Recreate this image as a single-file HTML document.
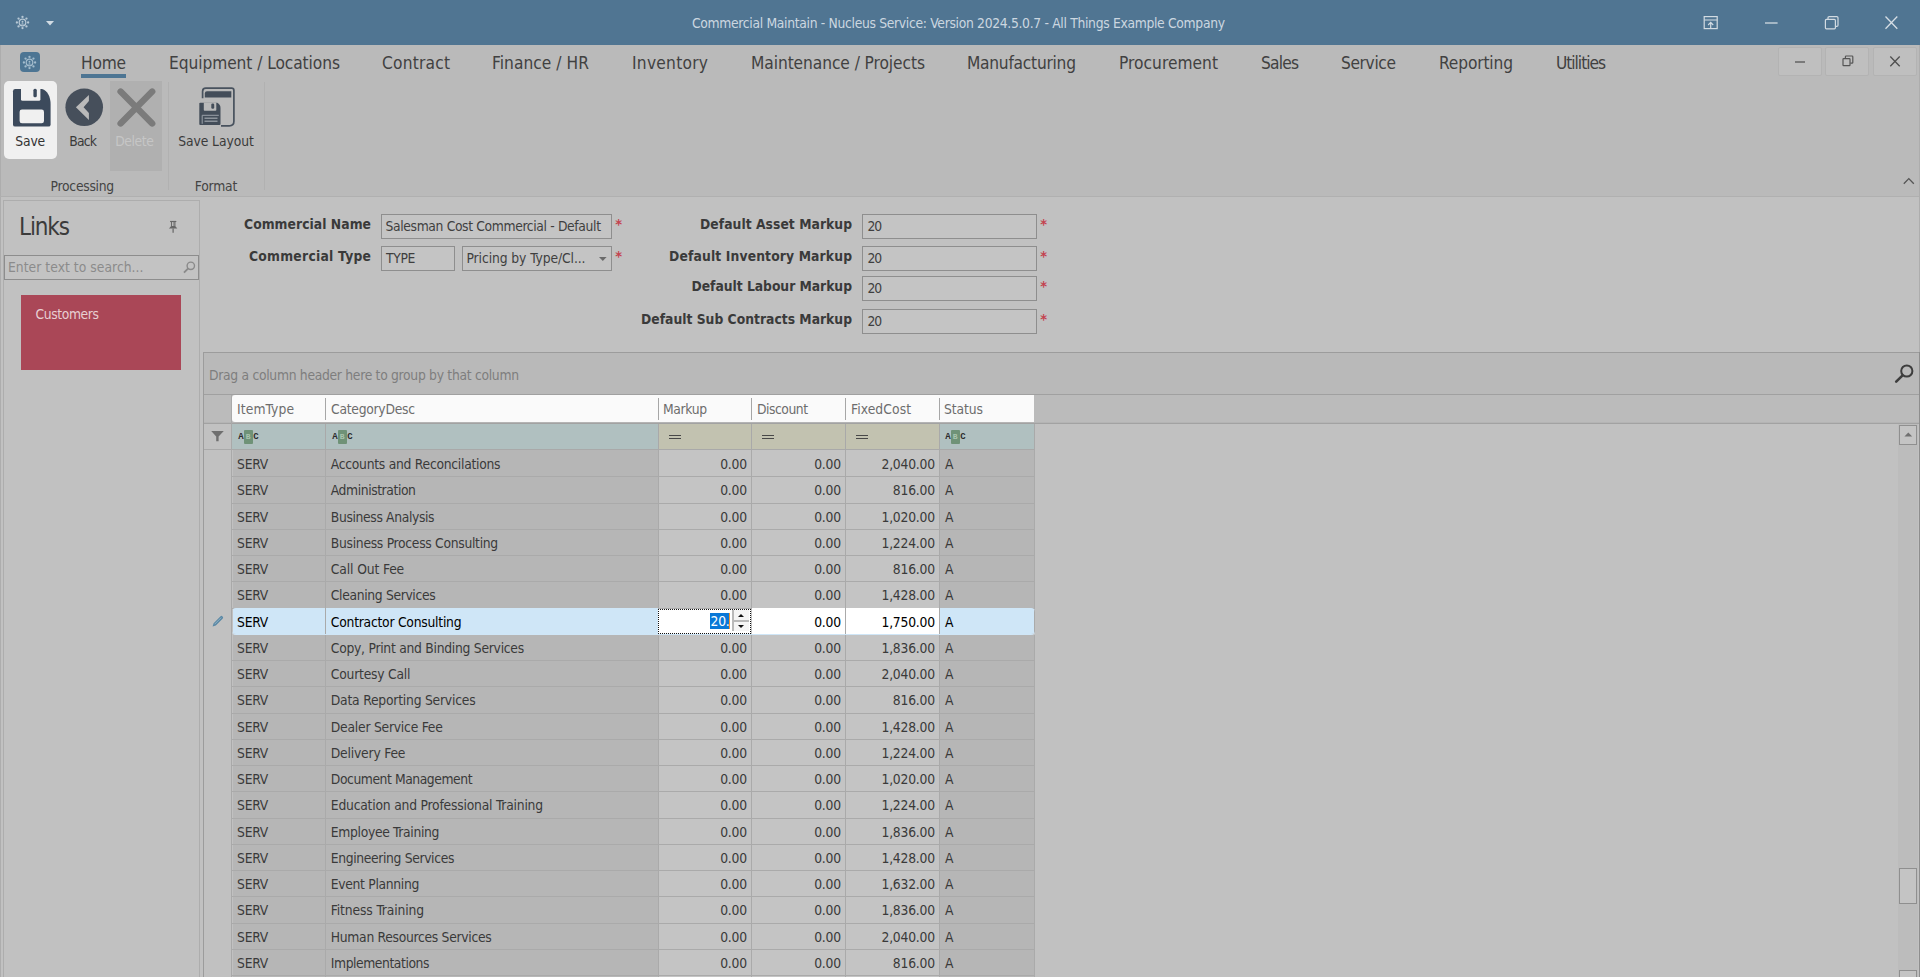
<!DOCTYPE html>
<html lang="en">
<head>
<meta charset="utf-8">
<title>Commercial Maintain - Nucleus Service</title>
<style>
*{box-sizing:border-box;margin:0;padding:0}
html,body{width:1920px;height:977px;overflow:hidden;background:#c1c1c1}
body{position:relative;font-family:"DejaVu Sans Condensed","Liberation Sans",sans-serif;font-size:13.75px;color:#3a3a3a}
.abs,.t,#titlebar,#tabrow,#ribbon,#content,#links,#grid{position:absolute}
.t{white-space:nowrap;line-height:normal}
svg{position:absolute;overflow:visible}
#titlebar{left:0;top:0;width:1920px;height:45px;background:#507592}
#ribbon{left:0;top:45px;width:1920px;height:152px;background:#bababa;border-bottom:1px solid #b0b0b0;border-left:1px solid #adadad}
#homeline{left:81px;top:74px;width:45px;height:3.5px;background:#4d7593}
#appicon{position:absolute;left:20px;top:52px;width:20px;height:20px;border-radius:4px;background:#4d7593}
.rbtn{position:absolute;border-radius:5px}
#bsave{left:4px;top:81px;width:53px;height:78px;background:#f0f0f0}
#bdel{left:110px;top:81px;width:52px;height:90px;background:#b0b0b0;border-radius:0}
.gsep{position:absolute;top:82px;width:1px;height:108px;background:#b1b1b1}
.mdi{position:absolute;top:47px;width:44px;height:29px;border:1px solid #b3b3b3;background:#bfbfbf;border-radius:2px}
#content{left:0;top:197px;width:1920px;height:780px;background:#c1c1c1;border-left:1px solid #adadad}
#links{left:3px;top:200px;width:197px;height:790px;border:1px solid #adadad;background:#c1c1c1}
#search{left:4px;top:255px;width:195px;height:25px;border:1px solid #8d8d8d;background:#c3c3c3}
#tile{left:21px;top:295px;width:160px;height:75px;background:#aa4757}
.inp{position:absolute;height:25px;border:1px solid #8e8e8e;background:#c4c4c4}
.ast{position:absolute;color:#c4424e;font-size:14.5px;font-weight:700;line-height:1;margin-top:-.8px;margin-left:.3px}
#grid{left:203px;top:352px;width:1717px;height:640px;border:1px solid #9c9c9c;background:#c1c1c1}
#gpanel{left:204px;top:353px;width:1715px;height:42px;background:#b9b9b9;border-bottom:1px solid #a0a0a0}
#hdrline{left:204px;top:422px;width:1715px;height:2px;background:#a2a2a2;border-top:1px solid #b4b4b4}
#hdrband{left:204px;top:395px;width:1715px;height:27px;background:#bbb}
#hdr{left:232px;top:395px;width:802px;height:27px;background:#fafafa;border-radius:3px 0 0 3px}
.hsep{position:absolute;top:398px;width:1px;height:22px;background:#a6a6a6}
#filter{left:204px;top:424px;width:830px;height:26px}
.fc{position:absolute;top:0;height:26px;border-bottom:1px solid #a9a9a9;border-right:1px solid #a9a9a9}
.fs{background:#b0c0c0}.fn{background:#c2c2b0}
#indcol{left:204px;top:395px;width:28px;height:590px;border-right:1px solid #a9a9a9}
#indf{left:204px;top:424px;width:27px;height:26px;border-bottom:1px solid #a9a9a9}
.row{position:absolute;left:232px;width:803px;border-bottom:1px solid #aaa}
.cell{position:absolute;top:0;border-right:1px solid #aaa;overflow:hidden;letter-spacing:-0.22px;white-space:nowrap;box-sizing:content-box}
.cell span{position:absolute;left:4px;line-height:normal}
.cell.n span{left:auto;right:4.2px}
.cell.c5 span{left:5px}
.c0,.c1,.c5{background:#b6b6b6}
.c2,.c3,.c4{background:#c4c4c4}
.row.sel .cell{background:#cfe6f7;color:#000}
.row.sel .c2,.row.sel .c3,.row.sel .c4{background:#fff}
.row.sel{border-bottom-color:#cfe6f7;border-radius:4px;overflow:hidden}
#sbtrack{left:1898px;top:424px;width:20px;height:560px;background:#bcbcbc}
.sbb{position:absolute;left:1899px;width:18px;border:1px solid #8f8f8f;background:#c4c4c4}
#rborder{left:1919px;top:45px;width:1px;height:307px;background:#adadad}#rborder2{left:1919px;top:352px;width:1px;height:625px;background:#8e8e8e}
.cell.edit{border:0;background:#fff !important;z-index:3;letter-spacing:0}
.cell.edit:before{content:"";position:absolute;left:0;top:0;right:0;bottom:0;border:1px dotted #111}
.cell.edit .selnum{position:absolute;right:auto;left:52px;top:3.5px;width:19.5px;height:16.4px;background:#0a78d7;color:#fff;line-height:normal;padding-left:.6px;letter-spacing:-.3px}
.caret{position:absolute;left:71px;top:3.5px;width:1px;height:16.4px;background:#f39432}
.cell.edit .spin{position:absolute;left:74.2px;right:auto;top:1px;width:17.2px;height:21.3px;background:#b9b9b9}
.spin i{position:absolute;left:1.6px;width:15.6px;background:#f5f5f5}
.spin i.up{top:.4px;height:9.8px}.spin i.dn{top:12px;height:9.4px}
.spin i:after{content:"";position:absolute;left:4.2px;border:3.5px solid transparent}
.spin i.up:after{top:3.4px;border-bottom:3.4px solid #111;border-top:0}
.spin i.dn:after{top:3px;border-top:3.6px solid #111;border-bottom:0}
.abc{position:absolute;top:430px;height:14px;width:21px;font-family:"Liberation Mono","DejaVu Sans Mono",monospace;font-size:9px;font-weight:700;line-height:14px;color:#2d2d2d;white-space:nowrap}
.abc b{position:absolute;left:0;top:0;width:6px;text-align:center}
.abc b:last-child{left:15px}
.abc i{position:absolute;left:6px;top:0;width:8.5px;height:14px;background:#6f9277;color:#a9c4ae;font-style:normal;text-align:center;border-radius:1px;font-size:8px}
.eq{position:absolute;top:434.8px;width:11.5px;height:4.4px;border-top:1.7px solid #484848;border-bottom:1.7px solid #484848}
</style>
</head>
<body>
<div id="titlebar"></div>
<div id="ribbon"></div>
<div id="appicon"></div>
<div id="homeline" class="abs"></div>
<div id="bsave" class="rbtn"></div>
<div id="bdel" class="rbtn"></div>
<div class="gsep" style="left:168px"></div>
<div class="gsep" style="left:264px"></div>
<div class="mdi" style="left:1778px"></div>
<div class="mdi" style="left:1825px"></div>
<div class="mdi" style="left:1873px"></div>
<div id="content"></div>
<div id="links"></div>
<div id="search" class="abs"></div>
<div id="tile" class="abs"></div>

<div class="inp" style="left:381px;top:214px;width:231px"></div>
<div class="inp" style="left:381px;top:246px;width:74px"></div>
<div class="inp" style="left:462px;top:246px;width:150px"></div>
<div class="inp" style="left:862px;top:214px;width:175px"></div>
<div class="inp" style="left:862px;top:246px;width:175px"></div>
<div class="inp" style="left:862px;top:276px;width:175px"></div>
<div class="inp" style="left:862px;top:309px;width:175px"></div>

<div id="grid"></div>
<div id="gpanel" class="abs"></div>
<div id="hdrband" class="abs"></div>
<div id="hdr" class="abs"></div>
<div id="hdrline" class="abs"></div>
<div class="hsep" style="left:325px"></div>
<div class="hsep" style="left:658px"></div>
<div class="hsep" style="left:751px"></div>
<div class="hsep" style="left:845px"></div>
<div class="hsep" style="left:939px"></div>
<div id="indcol" class="abs"></div><div id="indf" class="abs"></div>
<div id="filter" class="abs">
 <div class="fc fs" style="left:28px;width:94px"></div>
 <div class="fc fs" style="left:122px;width:333px"></div>
 <div class="fc fn" style="left:455px;width:93px"></div>
 <div class="fc fn" style="left:548px;width:94px"></div>
 <div class="fc fn" style="left:642px;width:94px"></div>
 <div class="fc fs" style="left:736px;width:95px"></div>
</div>
<div id="rows">
<div class="row" style="top:450px;height:27px"><div class="cell c0" style="left:1px;width:92px;height:26px"><span style="top:6.00px">SERV</span></div><div class="cell c1" style="left:94px;width:332px;height:26px"><span style="top:6.00px;left:4.8px;letter-spacing:-0.267px">Accounts and Reconcilations</span></div><div class="cell c2 n" style="left:427px;width:92px;height:26px"><span style="top:6.00px">0.00</span></div><div class="cell c3 n" style="left:520px;width:93px;height:26px"><span style="top:6.00px">0.00</span></div><div class="cell c4 n" style="left:614px;width:93px;height:26px"><span style="top:6.00px">2,040.00</span></div><div class="cell c5" style="left:708px;width:94px;height:26px"><span style="top:6.00px">A</span></div></div>
<div class="row" style="top:477px;height:27px"><div class="cell c0" style="left:1px;width:92px;height:26px"><span style="top:5.25px">SERV</span></div><div class="cell c1" style="left:94px;width:332px;height:26px"><span style="top:5.25px;left:4.8px;letter-spacing:-0.414px">Administration</span></div><div class="cell c2 n" style="left:427px;width:92px;height:26px"><span style="top:5.25px">0.00</span></div><div class="cell c3 n" style="left:520px;width:93px;height:26px"><span style="top:5.25px">0.00</span></div><div class="cell c4 n" style="left:614px;width:93px;height:26px"><span style="top:5.25px">816.00</span></div><div class="cell c5" style="left:708px;width:94px;height:26px"><span style="top:5.25px">A</span></div></div>
<div class="row" style="top:504px;height:26px"><div class="cell c0" style="left:1px;width:92px;height:25px"><span style="top:4.50px">SERV</span></div><div class="cell c1" style="left:94px;width:332px;height:25px"><span style="top:4.50px;left:4.8px;letter-spacing:-0.356px">Business Analysis</span></div><div class="cell c2 n" style="left:427px;width:92px;height:25px"><span style="top:4.50px">0.00</span></div><div class="cell c3 n" style="left:520px;width:93px;height:25px"><span style="top:4.50px">0.00</span></div><div class="cell c4 n" style="left:614px;width:93px;height:25px"><span style="top:4.50px">1,020.00</span></div><div class="cell c5" style="left:708px;width:94px;height:25px"><span style="top:4.50px">A</span></div></div>
<div class="row" style="top:530px;height:26px"><div class="cell c0" style="left:1px;width:92px;height:25px"><span style="top:4.75px">SERV</span></div><div class="cell c1" style="left:94px;width:332px;height:25px"><span style="top:4.75px;left:4.8px;letter-spacing:-0.294px">Business Process Consulting</span></div><div class="cell c2 n" style="left:427px;width:92px;height:25px"><span style="top:4.75px">0.00</span></div><div class="cell c3 n" style="left:520px;width:93px;height:25px"><span style="top:4.75px">0.00</span></div><div class="cell c4 n" style="left:614px;width:93px;height:25px"><span style="top:4.75px">1,224.00</span></div><div class="cell c5" style="left:708px;width:94px;height:25px"><span style="top:4.75px">A</span></div></div>
<div class="row" style="top:556px;height:26px"><div class="cell c0" style="left:1px;width:92px;height:25px"><span style="top:5.00px">SERV</span></div><div class="cell c1" style="left:94px;width:332px;height:25px"><span style="top:5.00px;left:4.8px;letter-spacing:-0.139px">Call Out Fee</span></div><div class="cell c2 n" style="left:427px;width:92px;height:25px"><span style="top:5.00px">0.00</span></div><div class="cell c3 n" style="left:520px;width:93px;height:25px"><span style="top:5.00px">0.00</span></div><div class="cell c4 n" style="left:614px;width:93px;height:25px"><span style="top:5.00px">816.00</span></div><div class="cell c5" style="left:708px;width:94px;height:25px"><span style="top:5.00px">A</span></div></div>
<div class="row" style="top:582px;height:27px"><div class="cell c0" style="left:1px;width:92px;height:26px"><span style="top:5.25px">SERV</span></div><div class="cell c1" style="left:94px;width:332px;height:26px"><span style="top:5.25px;left:4.8px;letter-spacing:-0.344px">Cleaning Services</span></div><div class="cell c2 n" style="left:427px;width:92px;height:26px"><span style="top:5.25px">0.00</span></div><div class="cell c3 n" style="left:520px;width:93px;height:26px"><span style="top:5.25px">0.00</span></div><div class="cell c4 n" style="left:614px;width:93px;height:26px"><span style="top:5.25px">1,428.00</span></div><div class="cell c5" style="left:708px;width:94px;height:26px"><span style="top:5.25px">A</span></div></div>
<div class="row sel" style="top:608px;height:27px"><div class="cell c0" style="left:1px;width:92px;height:26px"><span style="top:5.50px">SERV</span></div><div class="cell c1" style="left:94px;width:332px;height:26px"><span style="top:5.50px;left:4.8px;letter-spacing:-0.240px">Contractor Consulting</span></div><div class="cell c2 n edit" style="left:426px;top:1px;width:93px;height:25px"><span class="selnum">20.</span><b class="caret"></b><span class="spin"><i class="up"></i><i class="dn"></i></span></div><div class="cell c3 n" style="left:520px;width:93px;height:26px"><span style="top:5.50px">0.00</span></div><div class="cell c4 n" style="left:614px;width:93px;height:26px"><span style="top:5.50px">1,750.00</span></div><div class="cell c5" style="left:708px;width:94px;height:26px"><span style="top:5.50px">A</span></div></div>
<div class="row" style="top:635px;height:26px"><div class="cell c0" style="left:1px;width:92px;height:25px"><span style="top:4.75px">SERV</span></div><div class="cell c1" style="left:94px;width:332px;height:25px"><span style="top:4.75px;left:4.8px;letter-spacing:-0.267px">Copy, Print and Binding Services</span></div><div class="cell c2 n" style="left:427px;width:92px;height:25px"><span style="top:4.75px">0.00</span></div><div class="cell c3 n" style="left:520px;width:93px;height:25px"><span style="top:4.75px">0.00</span></div><div class="cell c4 n" style="left:614px;width:93px;height:25px"><span style="top:4.75px">1,836.00</span></div><div class="cell c5" style="left:708px;width:94px;height:25px"><span style="top:4.75px">A</span></div></div>
<div class="row" style="top:661px;height:26px"><div class="cell c0" style="left:1px;width:92px;height:25px"><span style="top:5.00px">SERV</span></div><div class="cell c1" style="left:94px;width:332px;height:25px"><span style="top:5.00px;left:4.8px;letter-spacing:-0.222px">Courtesy Call</span></div><div class="cell c2 n" style="left:427px;width:92px;height:25px"><span style="top:5.00px">0.00</span></div><div class="cell c3 n" style="left:520px;width:93px;height:25px"><span style="top:5.00px">0.00</span></div><div class="cell c4 n" style="left:614px;width:93px;height:25px"><span style="top:5.00px">2,040.00</span></div><div class="cell c5" style="left:708px;width:94px;height:25px"><span style="top:5.00px">A</span></div></div>
<div class="row" style="top:687px;height:27px"><div class="cell c0" style="left:1px;width:92px;height:26px"><span style="top:5.25px">SERV</span></div><div class="cell c1" style="left:94px;width:332px;height:26px"><span style="top:5.25px;left:4.8px;letter-spacing:-0.219px">Data Reporting Services</span></div><div class="cell c2 n" style="left:427px;width:92px;height:26px"><span style="top:5.25px">0.00</span></div><div class="cell c3 n" style="left:520px;width:93px;height:26px"><span style="top:5.25px">0.00</span></div><div class="cell c4 n" style="left:614px;width:93px;height:26px"><span style="top:5.25px">816.00</span></div><div class="cell c5" style="left:708px;width:94px;height:26px"><span style="top:5.25px">A</span></div></div>
<div class="row" style="top:714px;height:26px"><div class="cell c0" style="left:1px;width:92px;height:25px"><span style="top:4.50px">SERV</span></div><div class="cell c1" style="left:94px;width:332px;height:25px"><span style="top:4.50px;left:4.8px;letter-spacing:-0.235px">Dealer Service Fee</span></div><div class="cell c2 n" style="left:427px;width:92px;height:25px"><span style="top:4.50px">0.00</span></div><div class="cell c3 n" style="left:520px;width:93px;height:25px"><span style="top:4.50px">0.00</span></div><div class="cell c4 n" style="left:614px;width:93px;height:25px"><span style="top:4.50px">1,428.00</span></div><div class="cell c5" style="left:708px;width:94px;height:25px"><span style="top:4.50px">A</span></div></div>
<div class="row" style="top:740px;height:26px"><div class="cell c0" style="left:1px;width:92px;height:25px"><span style="top:4.75px">SERV</span></div><div class="cell c1" style="left:94px;width:332px;height:25px"><span style="top:4.75px;left:4.8px;letter-spacing:-0.206px">Delivery Fee</span></div><div class="cell c2 n" style="left:427px;width:92px;height:25px"><span style="top:4.75px">0.00</span></div><div class="cell c3 n" style="left:520px;width:93px;height:25px"><span style="top:4.75px">0.00</span></div><div class="cell c4 n" style="left:614px;width:93px;height:25px"><span style="top:4.75px">1,224.00</span></div><div class="cell c5" style="left:708px;width:94px;height:25px"><span style="top:4.75px">A</span></div></div>
<div class="row" style="top:766px;height:26px"><div class="cell c0" style="left:1px;width:92px;height:25px"><span style="top:5.00px">SERV</span></div><div class="cell c1" style="left:94px;width:332px;height:25px"><span style="top:5.00px;left:4.8px;letter-spacing:-0.433px">Document Management</span></div><div class="cell c2 n" style="left:427px;width:92px;height:25px"><span style="top:5.00px">0.00</span></div><div class="cell c3 n" style="left:520px;width:93px;height:25px"><span style="top:5.00px">0.00</span></div><div class="cell c4 n" style="left:614px;width:93px;height:25px"><span style="top:5.00px">1,020.00</span></div><div class="cell c5" style="left:708px;width:94px;height:25px"><span style="top:5.00px">A</span></div></div>
<div class="row" style="top:792px;height:27px"><div class="cell c0" style="left:1px;width:92px;height:26px"><span style="top:5.25px">SERV</span></div><div class="cell c1" style="left:94px;width:332px;height:26px"><span style="top:5.25px;left:4.8px;letter-spacing:-0.213px">Education and Professional Training</span></div><div class="cell c2 n" style="left:427px;width:92px;height:26px"><span style="top:5.25px">0.00</span></div><div class="cell c3 n" style="left:520px;width:93px;height:26px"><span style="top:5.25px">0.00</span></div><div class="cell c4 n" style="left:614px;width:93px;height:26px"><span style="top:5.25px">1,224.00</span></div><div class="cell c5" style="left:708px;width:94px;height:26px"><span style="top:5.25px">A</span></div></div>
<div class="row" style="top:819px;height:26px"><div class="cell c0" style="left:1px;width:92px;height:25px"><span style="top:4.50px">SERV</span></div><div class="cell c1" style="left:94px;width:332px;height:25px"><span style="top:4.50px;left:4.8px;letter-spacing:-0.324px">Employee Training</span></div><div class="cell c2 n" style="left:427px;width:92px;height:25px"><span style="top:4.50px">0.00</span></div><div class="cell c3 n" style="left:520px;width:93px;height:25px"><span style="top:4.50px">0.00</span></div><div class="cell c4 n" style="left:614px;width:93px;height:25px"><span style="top:4.50px">1,836.00</span></div><div class="cell c5" style="left:708px;width:94px;height:25px"><span style="top:4.50px">A</span></div></div>
<div class="row" style="top:845px;height:26px"><div class="cell c0" style="left:1px;width:92px;height:25px"><span style="top:4.75px">SERV</span></div><div class="cell c1" style="left:94px;width:332px;height:25px"><span style="top:4.75px;left:4.8px;letter-spacing:-0.357px">Engineering Services</span></div><div class="cell c2 n" style="left:427px;width:92px;height:25px"><span style="top:4.75px">0.00</span></div><div class="cell c3 n" style="left:520px;width:93px;height:25px"><span style="top:4.75px">0.00</span></div><div class="cell c4 n" style="left:614px;width:93px;height:25px"><span style="top:4.75px">1,428.00</span></div><div class="cell c5" style="left:708px;width:94px;height:25px"><span style="top:4.75px">A</span></div></div>
<div class="row" style="top:871px;height:26px"><div class="cell c0" style="left:1px;width:92px;height:25px"><span style="top:5.00px">SERV</span></div><div class="cell c1" style="left:94px;width:332px;height:25px"><span style="top:5.00px;left:4.8px;letter-spacing:-0.319px">Event Planning</span></div><div class="cell c2 n" style="left:427px;width:92px;height:25px"><span style="top:5.00px">0.00</span></div><div class="cell c3 n" style="left:520px;width:93px;height:25px"><span style="top:5.00px">0.00</span></div><div class="cell c4 n" style="left:614px;width:93px;height:25px"><span style="top:5.00px">1,632.00</span></div><div class="cell c5" style="left:708px;width:94px;height:25px"><span style="top:5.00px">A</span></div></div>
<div class="row" style="top:897px;height:27px"><div class="cell c0" style="left:1px;width:92px;height:26px"><span style="top:5.25px">SERV</span></div><div class="cell c1" style="left:94px;width:332px;height:26px"><span style="top:5.25px;left:4.8px;letter-spacing:-0.137px">Fitness Training</span></div><div class="cell c2 n" style="left:427px;width:92px;height:26px"><span style="top:5.25px">0.00</span></div><div class="cell c3 n" style="left:520px;width:93px;height:26px"><span style="top:5.25px">0.00</span></div><div class="cell c4 n" style="left:614px;width:93px;height:26px"><span style="top:5.25px">1,836.00</span></div><div class="cell c5" style="left:708px;width:94px;height:26px"><span style="top:5.25px">A</span></div></div>
<div class="row" style="top:924px;height:26px"><div class="cell c0" style="left:1px;width:92px;height:25px"><span style="top:4.50px">SERV</span></div><div class="cell c1" style="left:94px;width:332px;height:25px"><span style="top:4.50px;left:4.8px;letter-spacing:-0.297px">Human Resources Services</span></div><div class="cell c2 n" style="left:427px;width:92px;height:25px"><span style="top:4.50px">0.00</span></div><div class="cell c3 n" style="left:520px;width:93px;height:25px"><span style="top:4.50px">0.00</span></div><div class="cell c4 n" style="left:614px;width:93px;height:25px"><span style="top:4.50px">2,040.00</span></div><div class="cell c5" style="left:708px;width:94px;height:25px"><span style="top:4.50px">A</span></div></div>
<div class="row" style="top:950px;height:26px"><div class="cell c0" style="left:1px;width:92px;height:25px"><span style="top:4.75px">SERV</span></div><div class="cell c1" style="left:94px;width:332px;height:25px"><span style="top:4.75px;left:4.8px;letter-spacing:-0.433px">Implementations</span></div><div class="cell c2 n" style="left:427px;width:92px;height:25px"><span style="top:4.75px">0.00</span></div><div class="cell c3 n" style="left:520px;width:93px;height:25px"><span style="top:4.75px">0.00</span></div><div class="cell c4 n" style="left:614px;width:93px;height:25px"><span style="top:4.75px">816.00</span></div><div class="cell c5" style="left:708px;width:94px;height:25px"><span style="top:4.75px">A</span></div></div>
<div class="row" style="top:976px;height:2px;border:0"><div class="cell c0" style="left:1px;width:92px;height:2px"></div><div class="cell c1" style="left:94px;width:332px;height:2px"></div><div class="cell c2 n" style="left:427px;width:92px;height:2px"></div><div class="cell c3 n" style="left:520px;width:93px;height:2px"></div><div class="cell c4 n" style="left:614px;width:93px;height:2px"></div><div class="cell c5" style="left:708px;width:94px;height:2px"></div></div>
</div>
<div id="sbtrack" class="abs"></div>
<div class="sbb" style="top:425px;height:20px"></div>
<div class="sbb" style="top:868px;height:36px"></div>
<div class="sbb" style="top:970px;height:20px"></div>
<div id="rborder" class="abs"></div><div id="rborder2" class="abs"></div>

<!-- title bar quick access gear + dropdown -->
<svg style="left:14.9px;top:15.0px" width="15" height="15" viewBox="-7.5 -7.5 15 15">
 <circle r="3.3" fill="none" stroke="#b7c8d5" stroke-width="1.2"/>
 <g fill="#b7c8d5"><circle cx="5.60" cy="0.00" r="1.15"/><circle cx="3.96" cy="3.96" r="1.15"/><circle cx="0.00" cy="5.60" r="1.15"/><circle cx="-3.96" cy="3.96" r="1.15"/><circle cx="-5.60" cy="0.00" r="1.15"/><circle cx="-3.96" cy="-3.96" r="1.15"/><circle cx="-0.00" cy="-5.60" r="1.15"/><circle cx="3.96" cy="-3.96" r="1.15"/><circle cx="0" cy="-0.7" r="0.95"/><path d="M-1.5,2Q0,-0.4 1.5,2Z"/></g>
</svg>
<svg style="left:46px;top:21px" width="8" height="5" viewBox="0 0 8 5"><path d="M0,0H8L4,4.5Z" fill="#d2dce4"/></svg>
<!-- app icon gear -->
<svg style="left:22.4px;top:55.0px" width="15" height="15" viewBox="-7.5 -7.5 15 15">
 <circle r="3.3" fill="none" stroke="#a3bccd" stroke-width="1.2"/>
 <g fill="#a3bccd"><circle cx="5.60" cy="0.00" r="1.15"/><circle cx="3.96" cy="3.96" r="1.15"/><circle cx="0.00" cy="5.60" r="1.15"/><circle cx="-3.96" cy="3.96" r="1.15"/><circle cx="-5.60" cy="0.00" r="1.15"/><circle cx="-3.96" cy="-3.96" r="1.15"/><circle cx="-0.00" cy="-5.60" r="1.15"/><circle cx="3.96" cy="-3.96" r="1.15"/><circle cx="0" cy="-0.7" r="0.95"/><path d="M-1.5,2Q0,-0.4 1.5,2Z"/></g>
</svg>
<!-- window buttons -->
<svg style="left:1703px;top:15px" width="16" height="15" viewBox="0 0 16 15" fill="none" stroke="#d2dbe2" stroke-width="1.2">
 <rect x="1.2" y="1.6" width="13" height="12"/><path d="M1.2,5H14.2M7.7,13.6V7.6M5.2,10L7.7,7.4L10.2,10"/>
</svg>
<svg style="left:1765px;top:22px" width="13" height="2" viewBox="0 0 13 2"><path d="M0,1H12.6" stroke="#d2dbe2" stroke-width="1.3"/></svg>
<svg style="left:1824px;top:15px" width="15" height="15" viewBox="0 0 15 15" fill="none" stroke="#d2dbe2" stroke-width="1.2">
 <rect x="1.4" y="4.4" width="10" height="9.4" rx="1"/><path d="M4,4.2V2.8Q4,1.6 5.2,1.6H12.8Q14,1.6 14,2.8V10.2Q14,11.4 12.8,11.4H11.6"/>
</svg>
<svg style="left:1885px;top:16px" width="13" height="13" viewBox="0 0 13 13"><path d="M0.5,0.5L12.3,12.7M12.3,0.5L0.5,12.7" stroke="#d6dee5" stroke-width="1.3"/></svg>
<!-- MDI buttons -->
<svg style="left:1795px;top:61px" width="11" height="2" viewBox="0 0 11 2"><path d="M0,1H10" stroke="#555" stroke-width="1.3"/></svg>
<svg style="left:1842px;top:55px" width="12" height="12" viewBox="0 0 12 12" fill="none" stroke="#555" stroke-width="1.2">
 <rect x="1" y="3.6" width="7" height="7" rx=".6"/><path d="M3.4,3.4V1.8Q3.4,1 4.2,1H10Q10.8,1 10.8,1.8V7.4Q10.8,8.2 10,8.2H8.4"/>
</svg>
<svg style="left:1890px;top:56px" width="10" height="11" viewBox="0 0 10 11"><path d="M0.3,0.5L9.7,10.3M9.7,0.5L0.3,10.3" stroke="#4f4f4f" stroke-width="1.3"/></svg>
<!-- collapse chevron -->
<svg style="left:1903px;top:177px" width="12" height="8" viewBox="0 0 12 8"><path d="M0.8,6.8L5.8,1.6L10.8,6.8" fill="none" stroke="#555" stroke-width="1.3"/></svg>

<!-- Save icon -->
<svg style="left:12.8px;top:88.6px" width="37.6" height="37.6" viewBox="0 0 37.6 37.6">
 <path d="M2.2,0H29C34.5,1.5 37.6,8 37.6,15V35.4Q37.6,37.6 35.4,37.6H2.2Q0,37.6 0,35.4V2.2Q0,0 2.2,0Z" fill="#3c4a5c"/>
 <path d="M8,-0.3H27.4V10.2Q27.4,11.7 25.9,11.7H9.5Q8,11.7 8,10.2Z" fill="#f0f0f0"/>
 <rect x="20.4" y="-0.3" width="3.4" height="8.6" rx="1.5" fill="#3c4a5c"/>
 <rect x="6.6" y="20.5" width="24.4" height="13.8" rx="2.4" fill="#f0f0f0"/>
</svg>
<!-- Back icon -->
<svg style="left:65px;top:88px" width="39" height="39" viewBox="-19.2 -19.3 39 39">
 <circle r="18.8" fill="#464f5b"/>
 <path d="M-8.3,0L4.7,-12.2V-6.2L-0.6,0L4.7,5.8V12.6Z" fill="#bababa"/>
</svg>
<!-- Delete icon -->
<svg style="left:116px;top:87px" width="41" height="41" viewBox="116 87 41 41">
 <path d="M120.6,91.6L152.2,123.4M152.2,91.6L120.6,123.4" stroke="#7b7b7b" stroke-width="6.4" stroke-linecap="round" fill="none"/>
</svg>
<!-- Save layout icon -->
<svg style="left:198px;top:86px" width="38" height="42" viewBox="198 86 38 42">
 <path d="M202.6,98.2V91.4Q202.6,88.2 205.8,88.2H231.6Q233.9,88.2 233.9,90.4V121.2Q233.9,125.8 229.3,125.8H221" fill="none" stroke="#48525e" stroke-width="1.7"/>
 <path d="M204.8,97.4V93.4Q204.8,91.2 207,91.2H231.3V97.4Z" fill="#434d59"/>
 <path d="M200.2,102.8H217.2Q220.5,104.6 220.5,108V124Q220.5,124.9 219.6,124.9H200.2Q199.3,124.9 199.3,124V103.7Q199.3,102.8 200.2,102.8Z" fill="#434d59"/>
 <path d="M203.8,102.6H216.3V110Q216.3,110.8 215.5,110.8H204.6Q203.8,110.8 203.8,110Z" fill="#bababa"/>
 <rect x="211.3" y="103.6" width="2.9" height="5.2" rx="1.2" fill="#434d59"/>
 <path d="M202.2,123.8V115.3H218.8" fill="none" stroke="#9aa0a8" stroke-width="1"/>
 <path d="M204.5,118.2H217.5M204.5,121.2H217.5" stroke="#8c939b" stroke-width="1.6"/>
</svg>

<!-- Links pin -->
<svg style="left:168px;top:220px" width="11" height="14" viewBox="0 0 11 14">
 <path d="M2.1,1.5H8.3" stroke="#666" stroke-width="1.2" fill="none"/>
 <path d="M3.5,1.6V6.2M6.9,1.6V6.2" stroke="#6a6a6a" stroke-width="1.1" fill="none"/>
 <path d="M5.9,1.8V6.2" stroke="#777" stroke-width="1" fill="none"/>
 <path d="M3.2,6L0.9,8.4H9.3L7.2,6Z" fill="#666"/>
 <path d="M5.1,8.4V12.8" stroke="#666" stroke-width="1.2" fill="none"/>
</svg>
<!-- Links search magnifier -->
<svg style="left:183px;top:261px" width="13" height="13" viewBox="0 0 13 13" fill="none" stroke="#8a8a8a" stroke-width="1.3">
 <circle cx="7.8" cy="4.8" r="3.7" stroke-width="1.4"/><path d="M5.2,7.4L1,11.6" stroke-width="1.9"/>
</svg>
<!-- combo arrow -->
<svg style="left:599px;top:257px" width="8" height="5" viewBox="0 0 8 5"><path d="M0,0H7.6L3.8,4Z" fill="#6a6a6a"/></svg>
<!-- Grid search magnifier -->
<svg style="left:1894px;top:363px" width="21" height="21" viewBox="0 0 21 21" fill="none" stroke="#3d3d3d">
 <circle cx="12.8" cy="8" r="5.6" stroke-width="2"/><path d="M8.6,12.4L2.2,18.6" stroke-width="2.6" stroke-linecap="round"/>
</svg>
<!-- filter funnel -->
<svg style="left:211px;top:431px" width="13" height="11" viewBox="0 0 13 11"><path d="M0.2,0H12.8L7.6,5.4V10.2H5.2V5.4Z" fill="#6f6f6f"/></svg>
<!-- pencil (editing row) -->
<svg style="left:212px;top:615px" width="12" height="12" viewBox="0 0 12 12"><path d="M0.6,11.4L1.6,8.2L8.6,1.2Q9.4,0.4 10.2,1.2L10.8,1.8Q11.6,2.6 10.8,3.4L3.8,10.4Z" fill="#5a88a5"/><path d="M2.6,9.2L9.2,2.6" stroke="#8fb0c4" stroke-width="1" fill="none"/></svg>
<!-- scrollbar arrows -->
<svg style="left:1904px;top:432px" width="9" height="5" viewBox="0 0 9 5"><path d="M0.4,4.6H8.2L4.3,0.4Z" fill="#707070"/></svg>

<span class="ast" style="left:615px;top:218px">*</span>
<span class="ast" style="left:615px;top:250px">*</span>
<span class="ast" style="left:1040px;top:218px">*</span>
<span class="ast" style="left:1040px;top:250px">*</span>
<span class="ast" style="left:1040px;top:280px">*</span>
<span class="ast" style="left:1040px;top:313px">*</span>
<div class="abc" style="left:238px"><b>A</b><i>B</i><b>C</b></div>
<div class="abc" style="left:332px"><b>A</b><i>B</i><b>C</b></div>
<div class="abc" style="left:945px"><b>A</b><i>B</i><b>C</b></div>
<div class="eq" style="left:669px"></div>
<div class="eq" style="left:762.4px"></div>
<div class="eq" style="left:856px"></div>


<div id="texts">
<span class="t" style="left:692.0px;top:14.50px;font-size:13.75px;color:#ccd7e0;letter-spacing:-0.312px;">Commercial Maintain - Nucleus Service: Version 2024.5.0.7 - All Things Example Company</span>
<span class="t" style="left:81.0px;top:52.50px;font-size:17.2px;color:#414141;letter-spacing:-0.224px;">Home</span>
<span class="t" style="left:169.0px;top:52.50px;font-size:17.2px;color:#414141;letter-spacing:-0.070px;">Equipment / Locations</span>
<span class="t" style="left:382.0px;top:52.50px;font-size:17.2px;color:#414141;letter-spacing:0.212px;">Contract</span>
<span class="t" style="left:492.0px;top:52.50px;font-size:17.2px;color:#414141;letter-spacing:0.050px;">Finance / HR</span>
<span class="t" style="left:632.0px;top:52.50px;font-size:17.2px;color:#414141;letter-spacing:0.268px;">Inventory</span>
<span class="t" style="left:751.0px;top:52.50px;font-size:17.2px;color:#414141;letter-spacing:-0.072px;">Maintenance / Projects</span>
<span class="t" style="left:967.0px;top:52.50px;font-size:17.2px;color:#414141;letter-spacing:-0.249px;">Manufacturing</span>
<span class="t" style="left:1119.0px;top:52.50px;font-size:17.2px;color:#414141;letter-spacing:0.030px;">Procurement</span>
<span class="t" style="left:1261.0px;top:52.50px;font-size:17.2px;color:#414141;letter-spacing:-0.793px;">Sales</span>
<span class="t" style="left:1341.0px;top:52.50px;font-size:17.2px;color:#414141;letter-spacing:-0.359px;">Service</span>
<span class="t" style="left:1439.0px;top:52.50px;font-size:17.2px;color:#414141;letter-spacing:-0.139px;">Reporting</span>
<span class="t" style="left:1556.0px;top:52.50px;font-size:17.2px;color:#414141;letter-spacing:-1.025px;">Utilities</span>
<span class="t" style="left:15.3px;top:133.00px;font-size:13.75px;color:#333;letter-spacing:-0.158px;">Save</span>
<span class="t" style="left:69.3px;top:133.00px;font-size:13.75px;color:#3a3a3a;letter-spacing:-0.777px;">Back</span>
<span class="t" style="left:115.2px;top:133.00px;font-size:13.75px;color:#c6c6c6;letter-spacing:-0.391px;">Delete</span>
<span class="t" style="left:178.2px;top:133.00px;font-size:13.75px;color:#3a3a3a;letter-spacing:-0.074px;">Save Layout</span>
<span class="t" style="left:50.6px;top:178.00px;font-size:13.75px;color:#444;letter-spacing:-0.268px;">Processing</span>
<span class="t" style="left:194.7px;top:178.00px;font-size:13.75px;color:#444;letter-spacing:-0.163px;">Format</span>
<span class="t" style="left:19.0px;top:212.50px;font-size:24px;color:#3b3b3b;letter-spacing:-1.117px;">Links</span>
<span class="t" style="left:8.0px;top:259.00px;font-size:13.75px;color:#8b8b8b;letter-spacing:0.039px;">Enter text to search...</span>
<span class="t" style="left:35.5px;top:305.50px;font-size:13.75px;color:#e8cfd3;letter-spacing:-0.381px;">Customers</span>
<span class="t" style="left:244.0px;top:215.50px;font-size:13.75px;color:#3a3a3a;letter-spacing:0.050px;font-weight:700;">Commercial Name</span>
<span class="t" style="left:249.0px;top:248.00px;font-size:13.75px;color:#3a3a3a;letter-spacing:0.254px;font-weight:700;">Commercial Type</span>
<span class="t" style="left:385.5px;top:218.00px;font-size:13.75px;color:#3f3f3f;letter-spacing:-0.356px;">Salesman Cost Commercial - Default</span>
<span class="t" style="left:386.0px;top:250.40px;font-size:13.75px;color:#3f3f3f;letter-spacing:-0.330px;">TYPE</span>
<span class="t" style="left:466.5px;top:250.40px;font-size:13.75px;color:#3f3f3f;letter-spacing:-0.097px;">Pricing by Type/Cl...</span>
<span class="t" style="left:700.0px;top:216.00px;font-size:13.75px;color:#3a3a3a;letter-spacing:0.041px;font-weight:700;">Default Asset Markup</span>
<span class="t" style="left:669.0px;top:247.90px;font-size:13.75px;color:#3a3a3a;letter-spacing:0.137px;font-weight:700;">Default Inventory Markup</span>
<span class="t" style="left:691.5px;top:277.90px;font-size:13.75px;color:#3a3a3a;letter-spacing:-0.030px;font-weight:700;">Default Labour Markup</span>
<span class="t" style="left:641.0px;top:310.50px;font-size:13.75px;color:#3a3a3a;letter-spacing:0.006px;font-weight:700;">Default Sub Contracts Markup</span>
<span class="t" style="left:867.5px;top:218.00px;font-size:13.75px;color:#3f3f3f;letter-spacing:-1.050px;">20</span>
<span class="t" style="left:867.5px;top:250.00px;font-size:13.75px;color:#3f3f3f;letter-spacing:-1.050px;">20</span>
<span class="t" style="left:867.5px;top:280.00px;font-size:13.75px;color:#3f3f3f;letter-spacing:-1.050px;">20</span>
<span class="t" style="left:867.5px;top:312.50px;font-size:13.75px;color:#3f3f3f;letter-spacing:-1.050px;">20</span>
<span class="t" style="left:209.0px;top:367.00px;font-size:13.75px;color:#7e7e7e;letter-spacing:-0.294px;">Drag a column header here to group by that column</span>
<span class="t" style="left:237.0px;top:401.00px;font-size:13.75px;color:#6d6d6d;letter-spacing:0.092px;">ItemType</span>
<span class="t" style="left:331.0px;top:401.00px;font-size:13.75px;color:#6d6d6d;letter-spacing:-0.264px;">CategoryDesc</span>
<span class="t" style="left:663.0px;top:401.00px;font-size:13.75px;color:#6d6d6d;letter-spacing:-0.356px;">Markup</span>
<span class="t" style="left:757.0px;top:401.00px;font-size:13.75px;color:#6d6d6d;letter-spacing:-0.473px;">Discount</span>
<span class="t" style="left:851.0px;top:401.00px;font-size:13.75px;color:#6d6d6d;letter-spacing:0.072px;">FixedCost</span>
<span class="t" style="left:944.0px;top:401.00px;font-size:13.75px;color:#6d6d6d;letter-spacing:-0.084px;">Status</span>
</div>
</body>
</html>
